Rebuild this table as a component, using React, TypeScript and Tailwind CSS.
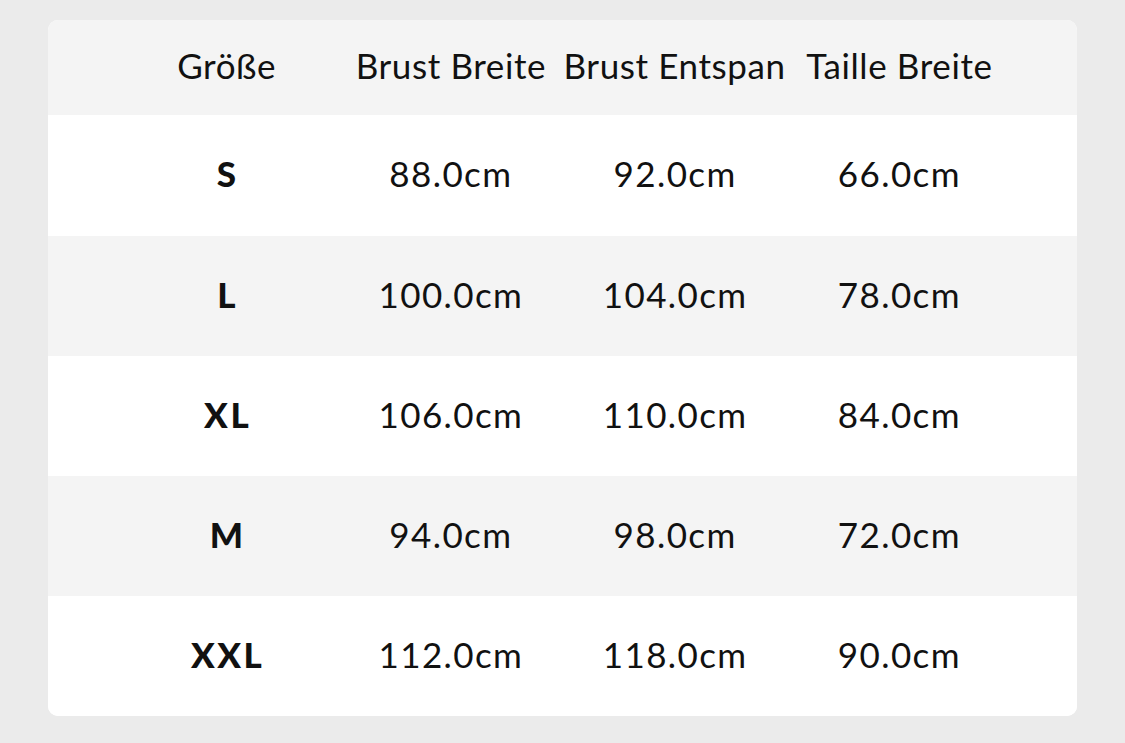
import React from 'react';

const headers = ['Größe', 'Brust Breite', 'Brust Entspannt', 'Taille Breite'];

const rows: { size: string; values: string[] }[] = [
  { size: 'S', values: ['88.0cm', '92.0cm', '66.0cm'] },
  { size: 'L', values: ['100.0cm', '104.0cm', '78.0cm'] },
  { size: 'XL', values: ['106.0cm', '110.0cm', '84.0cm'] },
  { size: 'M', values: ['94.0cm', '98.0cm', '72.0cm'] },
  { size: 'XXL', values: ['112.0cm', '118.0cm', '90.0cm'] },
];

export default function App() {
  return (
    <div
      className="w-[1125px] h-[743px] bg-[#ebebeb] pt-[20px] pl-[48px] text-[#111111]"
      style={{ fontFamily: 'Lato, "Noto Sans", sans-serif' }}
    >
      <div className="w-[1029px] rounded-[10px] overflow-hidden bg-white">
        {/* header */}
        <div className="h-[95px] pb-[4px] bg-[#f4f4f4] px-[66px] grid grid-cols-4 items-center">
          {headers.map((h) => (
            <div
              key={h}
              className="text-center text-[35px] tracking-[0.6px] whitespace-nowrap overflow-hidden pl-[1px]"
            >
              {h}
            </div>
          ))}
        </div>

        {rows.map((r, i) => (
          <div
            key={r.size}
            className={`h-[120px] pb-[4px] px-[66px] grid grid-cols-4 items-center ${
              i % 2 === 1 ? 'bg-[#f4f4f4]' : 'bg-white'
            } ${i === 0 ? 'h-[121px]' : ''}`}
          >
            <div className="text-center text-[35px] font-black tracking-[2.5px] pl-[3px]">{r.size}</div>
            {r.values.map((v, j) => (
              <div key={j} className="text-center text-[35px] tracking-[1.4px] pl-[1px]">
                {v}
              </div>
            ))}
          </div>
        ))}
      </div>
    </div>
  );
}
